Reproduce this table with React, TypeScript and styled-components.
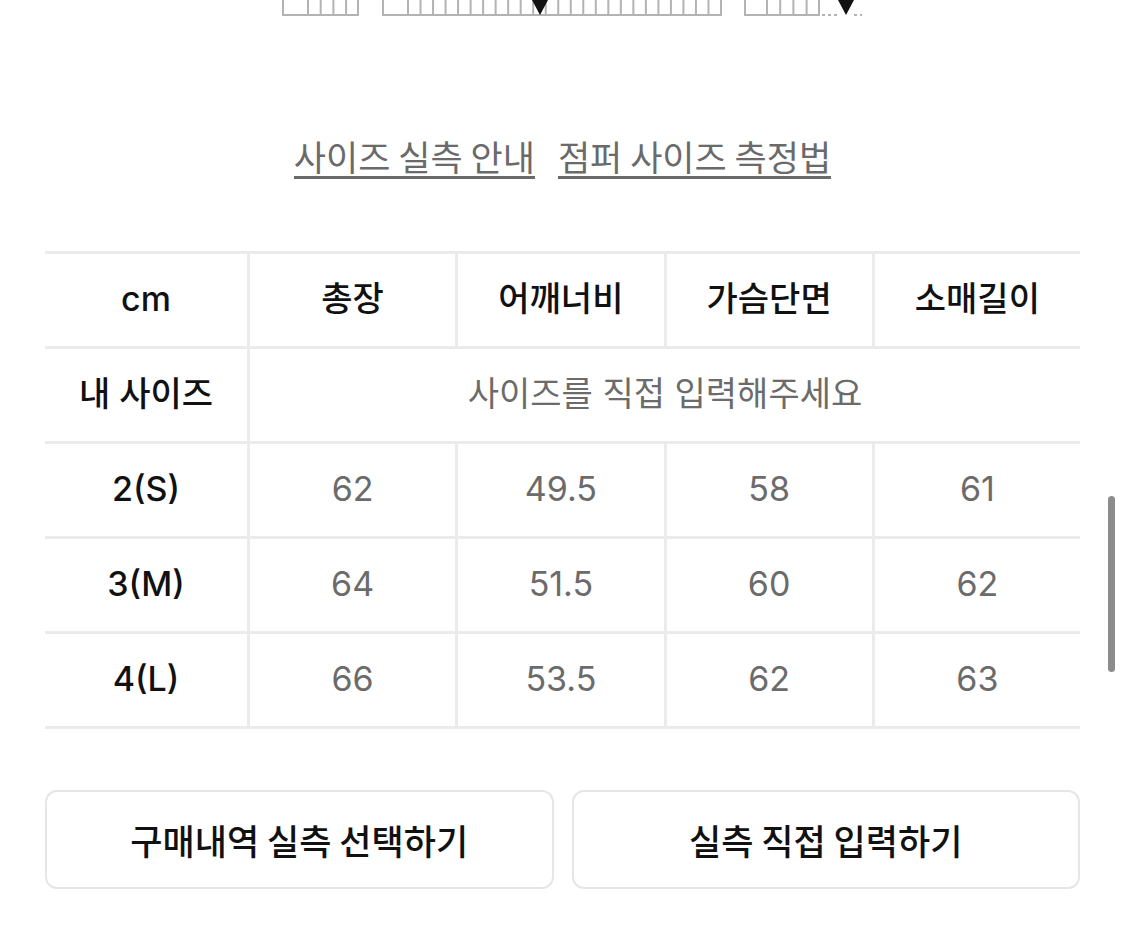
import React from "react";
import styled, { createGlobalStyle } from "styled-components";

const Global = createGlobalStyle`
  html, body { margin: 0; padding: 0; background: #ffffff; }
  body {
    font-family: Inter, "Noto Sans CJK KR", "Noto Sans", sans-serif;
    color: #111111;
  }
`;

const Page = styled.div`
  width: 1125px;
  height: 941px;
  overflow: hidden;
  box-sizing: border-box;
  display: flex;
  flex-direction: column;
`;

const RulerArt = styled.svg`
  display: block;
  width: 1125px;
  height: 18px;
  flex: none;
`;

const Links = styled.div`
  display: flex;
  justify-content: center;
  gap: 23px;
  margin-top: 118px;
`;

const GuideLink = styled.a`
  display: inline-block;
  font-family: "Noto Sans CJK KR", sans-serif;
  font-size: 35px;
  line-height: 40px;
  color: #6a6a6a;
  text-decoration: none;
  border-bottom: 3px solid #6a6a6a;
  cursor: pointer;
`;

const Content = styled.div`
  padding: 0 45px;
  display: flex;
  flex-direction: column;
`;

const SizeGrid = styled.div`
  margin-top: 72px;
  display: grid;
  grid-template-columns: 202px repeat(4, 1fr);
  border-bottom: 3px solid #ebebeb;
`;

const Cell = styled.div<{ $head?: boolean; $first?: boolean; $span?: number }>`
  box-sizing: border-box;
  height: 95px;
  border-top: 3px solid #ebebeb;
  border-left: ${(p) => (p.$first ? "none" : "3px solid #ebebeb")};
  display: flex;
  align-items: center;
  justify-content: center;
  padding-bottom: 2px;
  font-size: 34px;
  line-height: 1;
  color: ${(p) => (p.$head ? "#111111" : "#6b6b6b")};
  font-weight: ${(p) => (p.$head ? 500 : 400)};
  grid-column: ${(p) => (p.$span ? `span ${p.$span}` : "auto")};
`;

const Actions = styled.div`
  margin-top: 61px;
  display: grid;
  grid-template-columns: 1fr 1fr;
  gap: 18px;
`;

const ActionButton = styled.button`
  box-sizing: border-box;
  height: 99px;
  background: #ffffff;
  border: 2px solid #e6e6e6;
  border-radius: 12px;
  font-family: "Noto Sans CJK KR", sans-serif;
  font-size: 35px;
  font-weight: 500;
  color: #111111;
  cursor: pointer;
`;

const ScrollThumb = styled.div`
  position: fixed;
  right: 10px;
  top: 496px;
  width: 7px;
  height: 176px;
  border-radius: 4px;
  background: #8c8c8c;
`;

const Ruler = () => {
  const stroke = "#b3b3b3";
  const lines: React.ReactNode[] = [];
  const dividers = (start: number, end: number, step: number) => {
    for (let x = start; x < end - 2; x += step) {
      lines.push(
        <line key={`d${x}`} x1={x} y1={0} x2={x} y2={15} stroke={stroke} strokeWidth={2} />
      );
    }
  };
  dividers(308, 358, 12.7);
  dividers(408, 721, 12.52);
  dividers(767, 820, 13.2);
  return (
    <RulerArt viewBox="0 0 1125 18">
      <rect x={283} y={-4} width={75} height={19} fill="none" stroke={stroke} strokeWidth={2} />
      <rect x={383} y={-4} width={338} height={19} fill="none" stroke={stroke} strokeWidth={2} />
      <rect x={745} y={-4} width={74} height={19} fill="none" stroke={stroke} strokeWidth={2} />
      {lines}
      <line x1={822} y1={15} x2={839} y2={15} stroke={stroke} strokeWidth={2} strokeDasharray="3 3" />
      <line x1={854} y1={15} x2={862} y2={15} stroke={stroke} strokeWidth={2} strokeDasharray="3 3" />
      <polygon points="532,0 548,0 540,15" fill="#111111" />
      <polygon points="838,0 854,0 846,15" fill="#111111" />
    </RulerArt>
  );
};

const headers = ["총장", "어깨너비", "가슴단면", "소매길이"];
const rows: { label: string; values: string[] }[] = [
  { label: "2(S)", values: ["62", "49.5", "58", "61"] },
  { label: "3(M)", values: ["64", "51.5", "60", "62"] },
  { label: "4(L)", values: ["66", "53.5", "62", "63"] },
];

export default function App() {
  return (
    <Page>
      <Global />
      <Ruler />
      <Links>
        <GuideLink>사이즈 실측 안내</GuideLink>
        <GuideLink>점퍼 사이즈 측정법</GuideLink>
      </Links>
      <Content>
        <SizeGrid>
          <Cell $head $first>cm</Cell>
          {headers.map((h) => (
            <Cell $head key={h}>{h}</Cell>
          ))}
          <Cell $head $first>내 사이즈</Cell>
          <Cell $span={4}>사이즈를 직접 입력해주세요</Cell>
          {rows.map((r) => (
            <React.Fragment key={r.label}>
              <Cell $head $first>{r.label}</Cell>
              {r.values.map((v, i) => (
                <Cell key={i}>{v}</Cell>
              ))}
            </React.Fragment>
          ))}
        </SizeGrid>
        <Actions>
          <ActionButton>구매내역 실측 선택하기</ActionButton>
          <ActionButton>실측 직접 입력하기</ActionButton>
        </Actions>
      </Content>
      <ScrollThumb />
    </Page>
  );
}
